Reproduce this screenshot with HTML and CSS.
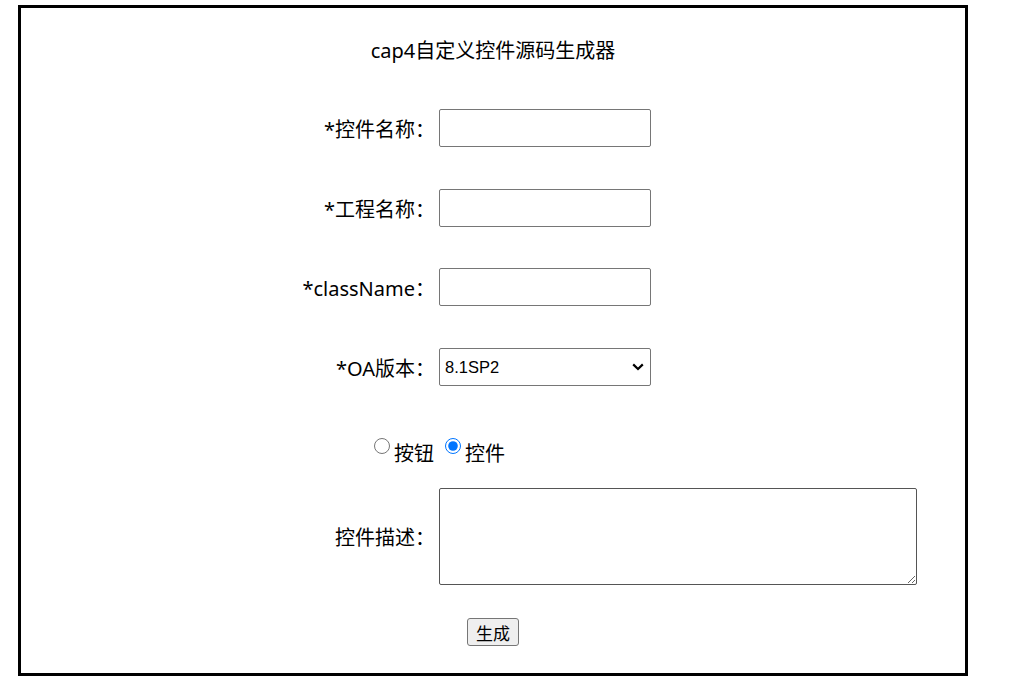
FILE: index.html
```html
<!DOCTYPE html>
<html lang="zh-CN">
<head>
<meta charset="utf-8">
<title>cap4自定义控件源码生成器</title>
<link rel="stylesheet" href="styles.css">
</head>
<body>
<div class="box">
  <div class="title">cap4自定义控件源码生成器</div>
  <div class="row row-1">
    <label class="label" for="ctl">*控件名称：</label>
    <input class="field" id="ctl" type="text">
  </div>
  <div class="row row-2">
    <label class="label" for="proj">*工程名称：</label>
    <input class="field" id="proj" type="text">
  </div>
  <div class="row row-3">
    <label class="label" for="cls">*className：</label>
    <input class="field" id="cls" type="text">
  </div>
  <div class="row row-4">
    <label class="label" for="ver">*OA版本：</label>
    <select class="field select" id="ver">
      <option>8.1SP2</option>
    </select>
  </div>
  <div class="radios">
    <label class="opt"><input class="radio" type="radio" name="kind"><span class="opt-text">按钮</span></label>
    <label class="opt opt-2"><input class="radio" type="radio" name="kind" checked><span class="opt-text">控件</span></label>
  </div>
  <div class="row row-desc">
    <label class="label" for="desc">控件描述：</label>
    <textarea class="area" id="desc"></textarea>
  </div>
  <button class="btn" type="button">生成</button>
</div>
</body>
</html>
```
FILE: styles.css
```css
body {
  margin: 0;
  font-family: "Noto Sans", "Noto Sans CJK SC", sans-serif;
  color: #000;
  background: #fff;
}

.box {
  box-sizing: border-box;
  width: 950px;
  height: 671px;
  margin: 5px 0 0 18px;
  border: 3px solid #000;
  display: flex;
  flex-direction: column;
}

.title {
  text-align: center;
  font-size: 20px;
  line-height: 28px;
  margin-top: 29px;
}

.row {
  display: flex;
  align-items: center;
}

.row-1 { margin-top: 44px; }
.row-2 { margin-top: 42px; }
.row-3 { margin-top: 41px; }
.row-4 { margin-top: 42px; }
.row-desc { margin-top: 24px; }

.label {
  width: 414px;
  text-align: right;
  font-size: 20px;
  line-height: 28px;
  padding-top: 3px;
  white-space: nowrap;
}

.field {
  box-sizing: border-box;
  width: 212px;
  height: 38px;
  margin: 0 0 0 4px;
  border: 1px solid #767676;
  border-radius: 2px;
  background: #fff;
  padding: 0 4px;
}

.select {
  -webkit-appearance: none;
  appearance: none;
  padding: 0 24px 0 5px;
  font-family: "Liberation Sans", Arial, sans-serif;
  font-size: 16.5px;
  color: #000;
  background: #fff url("data:image/svg+xml,%3Csvg xmlns='http://www.w3.org/2000/svg' width='12' height='8' viewBox='0 0 12 8'%3E%3Cpath d='M1.2 1.4 L6 6 L10.8 1.4' fill='none' stroke='%23000' stroke-width='2.2'/%3E%3C/svg%3E") no-repeat right 6px center;
}

.radios {
  display: flex;
  height: 28px;
  margin-top: 50px;
  padding-left: 353px;
}

.opt {
  display: flex;
  align-items: flex-start;
}

.opt-2 { margin-left: 11px; }

.radio {
  width: 16px;
  height: 16px;
  margin: 2px 4px 0 0;
}

.opt-text {
  margin-top: 8px;
  font-size: 20px;
  line-height: 20px;
}

.area {
  box-sizing: border-box;
  width: 478px;
  height: 97px;
  margin: 0 0 0 4px;
  border: 1px solid #555;
  border-radius: 2px;
  resize: both;
}

.btn {
  align-self: center;
  box-sizing: border-box;
  width: 52px;
  height: 28px;
  margin-top: 33px;
  padding: 0;
  font-family: "Noto Sans CJK SC", sans-serif;
  font-size: 17px;
  color: #000;
  background: #efefef;
  border: 1px solid #767676;
  border-radius: 3px;
}
```
